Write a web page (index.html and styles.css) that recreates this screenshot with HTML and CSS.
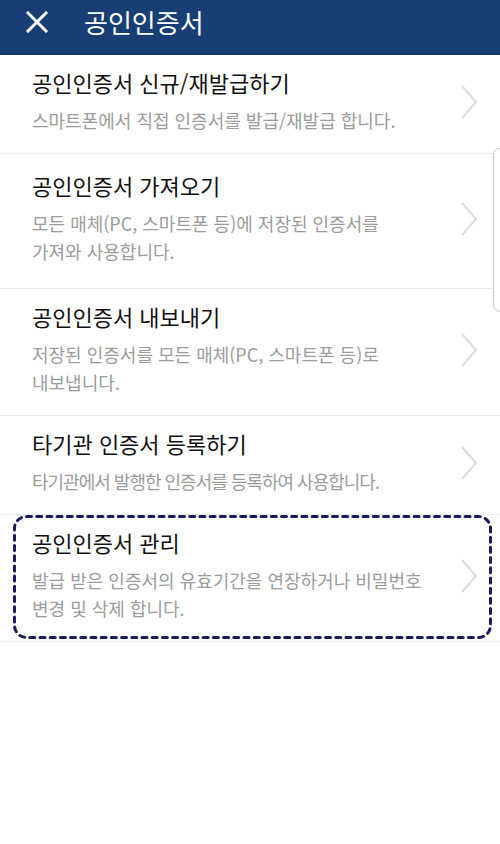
FILE: index.html
```html
<!DOCTYPE html>
<html lang="ko">
<head>
<meta charset="utf-8">
<link rel="stylesheet" href="styles.css">
</head>
<body>
<header class="appbar">
  <svg class="close" width="22" height="22" viewBox="0 0 22 22"><path d="M2 2L20 20M20 2L2 20" stroke="#fff" stroke-width="3" stroke-linecap="square"/></svg>
  <h1 class="appbar-title">공인인증서</h1>
</header>
<ul class="menu">
  <li class="item">
    <div class="text">
      <div class="title">공인인증서 신규/재발급하기</div>
      <div class="sub">스마트폰에서 직접 인증서를 발급/재발급 합니다.</div>
    </div>
    <svg class="chev" width="18" height="34" viewBox="0 0 18 34"><path d="M2 1L16 17L2 33" fill="none" stroke="#dcdcdc" stroke-width="2"/></svg>
  </li>
  <li class="item item-tall">
    <div class="text">
      <div class="title">공인인증서 가져오기</div>
      <div class="sub">모든 매체(PC, 스마트폰 등)에 저장된 인증서를<br>가져와 사용합니다.</div>
    </div>
    <svg class="chev" width="18" height="34" viewBox="0 0 18 34"><path d="M2 1L16 17L2 33" fill="none" stroke="#dcdcdc" stroke-width="2"/></svg>
  </li>
  <li class="item">
    <div class="text">
      <div class="title">공인인증서 내보내기</div>
      <div class="sub">저장된 인증서를 모든 매체(PC, 스마트폰 등)로<br>내보냅니다.</div>
    </div>
    <svg class="chev" width="18" height="34" viewBox="0 0 18 34"><path d="M2 1L16 17L2 33" fill="none" stroke="#dcdcdc" stroke-width="2"/></svg>
  </li>
  <li class="item">
    <div class="text">
      <div class="title">타기관 인증서 등록하기</div>
      <div class="sub sub-tight">타기관에서 발행한 인증서를 등록하여 사용합니다.</div>
    </div>
    <svg class="chev" width="18" height="34" viewBox="0 0 18 34"><path d="M2 1L16 17L2 33" fill="none" stroke="#dcdcdc" stroke-width="2"/></svg>
  </li>
  <li class="item item-focus">
    <div class="text">
      <div class="title">공인인증서 관리</div>
      <div class="sub">발급 받은 인증서의 유효기간을 연장하거나 비밀번호<br>변경 및 삭제 합니다.</div>
    </div>
    <svg class="chev" width="18" height="34" viewBox="0 0 18 34"><path d="M2 1L16 17L2 33" fill="none" stroke="#dcdcdc" stroke-width="2"/></svg>
    <svg class="focus-ring" width="479" height="124" viewBox="0 0 479 124"><rect x="1.5" y="1.5" width="476" height="121" rx="12" ry="12" fill="none" stroke="#1a1a5c" stroke-width="3" stroke-dasharray="5 5.2" stroke-linecap="round"/></svg>
  </li>
</ul>
<div class="fastscroll"></div>
</body>
</html>
```
FILE: styles.css
```css
html, body {
  margin: 0;
  padding: 0;
  background: #fff;
  font-family: "Noto Sans CJK KR", "Noto Sans", sans-serif;
}
body {
  width: 500px;
  height: 844px;
  overflow: hidden;
  position: relative;
}
.appbar {
  height: 55px;
  box-sizing: border-box;
  padding-bottom: 10px;
  background: #173f75;
  border-bottom: 1px solid #12315c;
  display: flex;
  align-items: center;
}
.close {
  margin-left: 26px;
  flex: none;
}
.appbar-title {
  margin: 0 0 0 36px;
  color: #fff;
  font-size: 26px;
  font-weight: 400;
  line-height: 32px;
}
.menu {
  list-style: none;
  margin: 0;
  padding: 0;
}
.item {
  position: relative;
  display: flex;
  align-items: center;
  padding: 10px 22px 19px 32px;
  border-bottom: 1px solid #ececec;
}
.item-tall {
  padding-top: 14px;
  padding-bottom: 23px;
}
.text {
  flex: 1;
  min-width: 0;
}
.title {
  font-size: 22px;
  line-height: 34px;
  color: #111;
  white-space: nowrap;
}
.sub {
  margin-top: 7px;
  font-size: 18px;
  line-height: 28px;
  color: #9c9c9c;
  white-space: nowrap;
}
.sub-tight {
  letter-spacing: -1px;
}
.chev {
  flex: none;
  margin-top: 4px;
}
.focus-ring {
  position: absolute;
  left: 13px;
  top: 0;
}
.fastscroll {
  position: absolute;
  left: 493px;
  top: 148px;
  width: 16px;
  height: 164px;
  box-sizing: border-box;
  border: 1.5px solid #c4c4c4;
  border-radius: 7px;
  background: #fff;
}
```
